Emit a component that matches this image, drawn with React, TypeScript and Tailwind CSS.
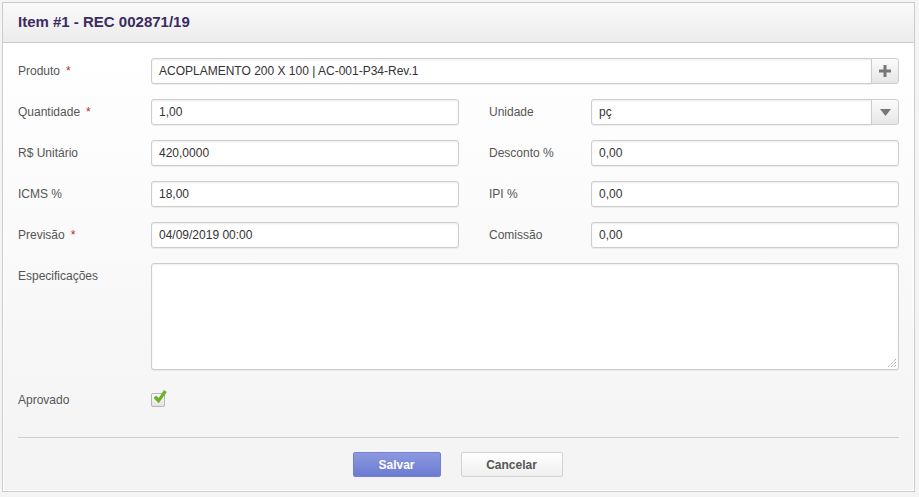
import React from "react";

const font = { fontFamily: '"Liberation Sans", Arial, sans-serif' };

const Label = ({ text, required }: { text: string; required?: boolean }) => (
  <div className="text-[12px] text-[#555] leading-none">
    {text}
    {required && <span className="ml-[6px] text-[#c0262d]">*</span>}
  </div>
);

const inputCls =
  "h-[26px] w-full rounded-[3px] border border-[#cdcdcd] bg-white px-[7px] text-[12px] text-[#333] shadow-[inset_0_1px_2px_rgba(0,0,0,0.08),0_1px_0_rgba(0,0,0,0.06)] flex items-center";

const Field = ({ value }: { value: string }) => <div className={inputCls}>{value}</div>;

const SideButton = ({ children }: { children: React.ReactNode }) => (
  <div className="flex h-[26px] w-[28px] shrink-0 items-center justify-center rounded-r-[3px] border border-[#cdcdcd] bg-gradient-to-b from-[#fbfbfb] to-[#e6e6e6] -ml-px">
    {children}
  </div>
);

const Row = ({
  l1,
  r1,
  v1,
  l2,
  v2,
  right2,
}: {
  l1: string;
  r1?: boolean;
  v1: string;
  l2: string;
  v2: string;
  right2?: React.ReactNode;
}) => (
  <div className="flex items-center h-[26px]">
    <div className="w-[133px] shrink-0">
      <Label text={l1} required={r1} />
    </div>
    <div className="flex-1">
      <Field value={v1} />
    </div>
    <div className="w-[30px] shrink-0" />
    <div className="w-[102px] shrink-0">
      <Label text={l2} />
    </div>
    <div className="flex-1 flex">
      {right2 ? (
        <>
          <div className={inputCls + " rounded-r-none"}>{v2}</div>
          {right2}
        </>
      ) : (
        <Field value={v2} />
      )}
    </div>
  </div>
);

export default function App() {
  return (
    <div style={font} className="h-[497px] w-full bg-[#f4f4f4] p-[2px]">
      <div className="flex h-[490px] w-[913px] flex-col border border-[#cccccc] bg-white">
        <div className="flex h-[40px] shrink-0 items-center border-b border-[#cccccc] bg-gradient-to-b from-[#fafafa] to-[#ececec] px-[15px]">
          <h1 className="text-[15px] font-bold text-[#3b2b63]">Item #1 - REC 002871/19</h1>
        </div>
        <div className="flex flex-1 flex-col border border-white bg-gradient-to-b from-[#ffffff] to-[#f3f3f3] pl-[14px] pr-[14px] pt-[14px]">
          <div className="flex flex-col gap-[15px]">
            <div className="flex items-center h-[26px]">
              <div className="w-[133px] shrink-0">
                <Label text="Produto" required />
              </div>
              <div className="flex flex-1">
                <div className={inputCls + " rounded-r-none"}>ACOPLAMENTO 200 X 100 | AC-001-P34-Rev.1</div>
                <SideButton>
                  <svg width="12" height="12" viewBox="0 0 12 12">
                    <path d="M4.5 0h3v4.5H12v3H7.5V12h-3V7.5H0v-3h4.5z" fill="#777" />
                  </svg>
                </SideButton>
              </div>
            </div>
            <Row
              l1="Quantidade"
              r1
              v1="1,00"
              l2="Unidade"
              v2="pç"
              right2={
                <SideButton>
                  <svg width="11" height="7" viewBox="0 0 11 7">
                    <path d="M0 0h11L5.5 7z" fill="#777" />
                  </svg>
                </SideButton>
              }
            />
            <Row l1="R$ Unitário" v1="420,0000" l2="Desconto %" v2="0,00" />
            <Row l1="ICMS %" v1="18,00" l2="IPI %" v2="0,00" />
            <Row l1="Previsão" r1 v1="04/09/2019 00:00" l2="Comissão" v2="0,00" />
          </div>
          <div className="mt-[15px] flex">
            <div className="w-[133px] shrink-0 pt-[7px]">
              <Label text="Especificações" />
            </div>
            <div className="relative h-[107px] flex-1 rounded-[3px] border border-[#cdcdcd] bg-white shadow-[inset_0_1px_2px_rgba(0,0,0,0.08),0_1px_0_rgba(0,0,0,0.06)]">
              <svg className="absolute bottom-[2px] right-[2px]" width="9" height="9" viewBox="0 0 9 9">
                <path d="M9 1L1 9M9 4L4 9M9 7L7 9" stroke="#888" strokeWidth="1" strokeDasharray="1 1" />
              </svg>
            </div>
          </div>
          <div className="mt-[22px] flex items-center h-[16px]">
            <div className="w-[133px] shrink-0">
              <Label text="Aprovado" />
            </div>
            <div className="relative h-[14px] w-[14px] rounded-[2px] border border-[#b5b5b5] bg-gradient-to-b from-[#ffffff] to-[#e4e4e4]">
              <svg className="absolute -top-[5px] left-[1px]" width="14" height="16" viewBox="0 0 14 16">
                <path d="M0.5 9l2.6-2.5 2.6 2.6L11 1l2.8 2-8 11.2z" fill="#6bb22a" />
              </svg>
            </div>
          </div>
          <div className="mt-[29px] border-t border-[#cfcfcf]" />
          <div className="mt-[14px] flex justify-center gap-[20px] pr-[2px]">
            <button className="h-[25px] w-[88px] rounded-[2px] border border-[#7480cf] bg-gradient-to-b from-[#8d99e0] to-[#6a7bd1] text-[12px] font-bold text-white">
              Salvar
            </button>
            <button className="h-[25px] w-[102px] rounded-[2px] border border-[#d3d3d3] bg-gradient-to-b from-[#ffffff] to-[#efefef] text-[12px] font-bold text-[#555]">
              Cancelar
            </button>
          </div>
        </div>
      </div>
    </div>
  );
}
